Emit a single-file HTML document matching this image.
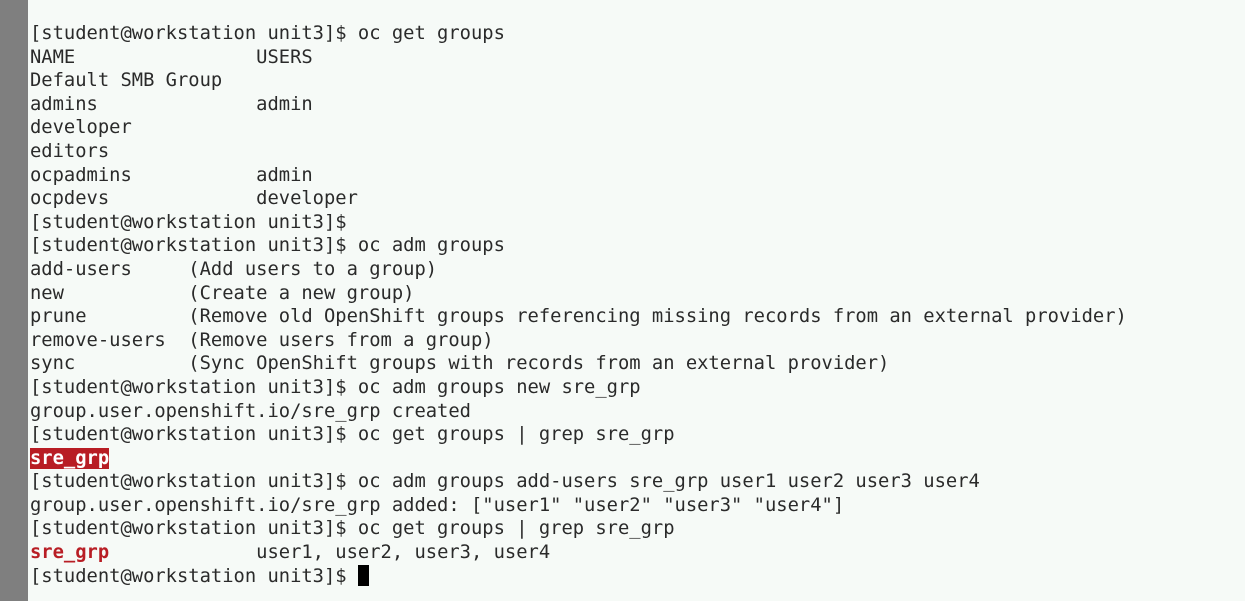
<!DOCTYPE html>
<html><head><meta charset="utf-8"><style>
html,body{margin:0;padding:0;width:1245px;height:601px;overflow:hidden;background:#f6faf7;}
.bar{position:absolute;left:0;top:0;width:28px;height:601px;background:#7f7f7f;}
pre{position:absolute;left:30px;top:22px;margin:0;font-family:"DejaVu Sans Mono","Liberation Mono",monospace;font-size:18.8px;line-height:23.6px;color:#2a2a2a;}
.hl{background:#b81d24;color:#fff;font-weight:bold;}
.r{color:#b81d24;font-weight:bold;}
.cur{display:inline-block;width:11px;height:21px;background:#000;vertical-align:-4px;}
</style></head><body><div class="bar"></div>
<pre>[student@workstation unit3]$ oc get groups
NAME                USERS
Default SMB Group
admins              admin
developer
editors
ocpadmins           admin
ocpdevs             developer
[student@workstation unit3]$
[student@workstation unit3]$ oc adm groups
add-users     (Add users to a group)
new           (Create a new group)
prune         (Remove old OpenShift groups referencing missing records from an external provider)
remove-users  (Remove users from a group)
sync          (Sync OpenShift groups with records from an external provider)
[student@workstation unit3]$ oc adm groups new sre_grp
group.user.openshift.io/sre_grp created
[student@workstation unit3]$ oc get groups | grep sre_grp
<span class="hl">sre_grp</span>
[student@workstation unit3]$ oc adm groups add-users sre_grp user1 user2 user3 user4
group.user.openshift.io/sre_grp added: ["user1" "user2" "user3" "user4"]
[student@workstation unit3]$ oc get groups | grep sre_grp
<span class="r">sre_grp</span>             user1, user2, user3, user4
[student@workstation unit3]$ <span class="cur"></span></pre>
</body></html>
